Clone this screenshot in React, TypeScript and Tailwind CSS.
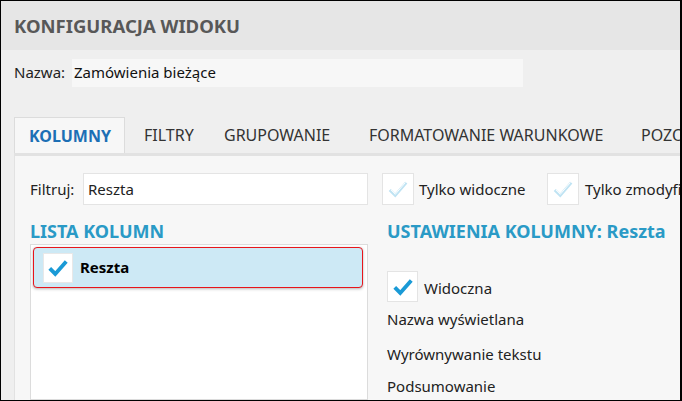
import React from "react";

const font = { fontFamily: '"Noto Sans", "Open Sans", sans-serif' };

function Check({ color, size = 20, thin = false }: { color: string; size?: number; thin?: boolean }) {
  if (thin) {
    return (
      <svg width={size} height={size} viewBox="0 0 24 24" fill="none">
        <path d="M3 13 L9 19 L21 5" stroke={color} strokeWidth="3.2" fill="none" />
        <path d="M4.2 13 L9 17.8 L20 5" stroke="#ffffff" strokeWidth="1" fill="none" />
      </svg>
    );
  }
  return (
    <svg width={size} height={size} viewBox="0 0 24 24" fill="none">
      <path d="M3 12.5 L9 18.5 L21 5" stroke={color} strokeWidth="4.2" strokeLinecap="butt" strokeLinejoin="miter" fill="none" />
    </svg>
  );
}

export default function App() {
  return (
    <div
      className="w-[682px] h-[401px] overflow-hidden bg-[#efefef] border-l border-t border-b border-r-2 border-black flex flex-col"
      style={font}
    >
      <div className="h-[49px] shrink-0 bg-[#e6e6e6] flex items-center pl-[13px]">
        <span className="text-[18.5px] font-bold text-[#585858] whitespace-nowrap">KONFIGURACJA WIDOKU</span>
      </div>
      <div className="flex items-center pl-[13px] pt-[8px] h-[37px] shrink-0 whitespace-nowrap">
        <span className="text-[15px] text-[#222] w-[58px] shrink-0">Nazwa:</span>
        <div className="w-[451px] shrink-0 h-[28px] bg-[#f7f7f7] flex items-center pl-[2px] text-[15px] text-[#111]">
          Zamówienia bieżące
        </div>
      </div>
      <div className="flex-1 flex flex-col pl-[13px] pt-[30px] min-h-0">
        <div className="flex items-end h-[36px] shrink-0 text-[16px] text-[#333] whitespace-nowrap">
          <div className="w-[111px] shrink-0 h-[36px] bg-[#f7f7f7] border-l border-t border-r border-[#dcdcdc] flex items-center pl-[14px] font-bold text-[#1c6fb5]">
            KOLUMNY
          </div>
          <div className="h-[36px] shrink-0 flex items-center pl-[19px] w-[99px]">FILTRY</div>
          <div className="h-[36px] shrink-0 flex items-center w-[145px]">GRUPOWANIE</div>
          <div className="h-[36px] shrink-0 flex items-center w-[272px]">FORMATOWANIE WARUNKOWE</div>
          <div className="h-[36px] shrink-0 flex items-center">POZOSTAŁE</div>
        </div>
        <div className="flex-1 bg-[#f7f7f7] border-l border-t-[3px] border-[#e2e2e2] flex flex-col pl-[15px] min-h-0">
          <div className="flex items-center h-[32px] mt-[17px] shrink-0 text-[15px] text-[#222] whitespace-nowrap">
            <span className="w-[53px] shrink-0">Filtruj:</span>
            <div className="w-[285px] shrink-0 h-[32px] bg-white border border-[#e4e4e4] flex items-center pl-[4px]">Reszta</div>
            <div className="ml-[14px] shrink-0 w-[32px] h-[32px] bg-white border border-[#e4e4e4] flex items-center justify-center">
              <Check color="#bfe3f3" thin size={22} />
            </div>
            <span className="ml-[5px] w-[128px] shrink-0">Tylko widoczne</span>
            <div className="shrink-0 w-[32px] h-[32px] bg-white border border-[#e4e4e4] flex items-center justify-center">
              <Check color="#bfe3f3" thin size={22} />
            </div>
            <span className="ml-[6px] shrink-0">Tylko zmodyfikowane</span>
          </div>
          <div className="flex flex-1 mt-[14px] min-h-0">
            <div className="w-[338px] shrink-0 flex flex-col">
              <div className="text-[18px] font-bold text-[#2a9ac6] h-[25px] leading-[25px] whitespace-nowrap">LISTA KOLUMN</div>
              <div className="flex-1 bg-white border border-[#dcdcdc] p-[2px] pr-[4px]">
                <div className="h-[41px] bg-[#cde9f5] border border-[#e8151b] rounded-[4px] shadow-[0_1px_3px_rgba(0,0,0,0.3)] flex items-center pl-[9px]">
                  <div className="w-[30px] h-[30px] bg-white border border-[#e8e8e8] flex items-center justify-center">
                    <Check color="#1a9ad6" size={22} />
                  </div>
                  <span className="ml-[7px] text-[15px] font-bold text-black">Reszta</span>
                </div>
              </div>
            </div>
            <div className="flex-1 flex flex-col pl-[19px] text-[15px] text-[#222] whitespace-nowrap">
              <div className="text-[18px] font-bold text-[#2a9ac6] h-[25px] leading-[25px]">USTAWIENIA KOLUMNY: Reszta</div>
              <div className="flex items-center mt-[27px] h-[31px]">
                <div className="w-[31px] h-[31px] bg-white border border-[#e4e4e4] flex items-center justify-center">
                  <Check color="#1a9ad6" size={22} />
                </div>
                <span className="ml-[6px] pt-[3px]">Widoczna</span>
              </div>
              <div className="mt-[8px] h-[18px] leading-[18px]">Nazwa wyświetlana</div>
              <div className="mt-[17px] h-[18px] leading-[18px]">Wyrównywanie tekstu</div>
              <div className="mt-[14px] h-[18px] leading-[18px]">Podsumowanie</div>
            </div>
          </div>
        </div>
      </div>
    </div>
  );
}
